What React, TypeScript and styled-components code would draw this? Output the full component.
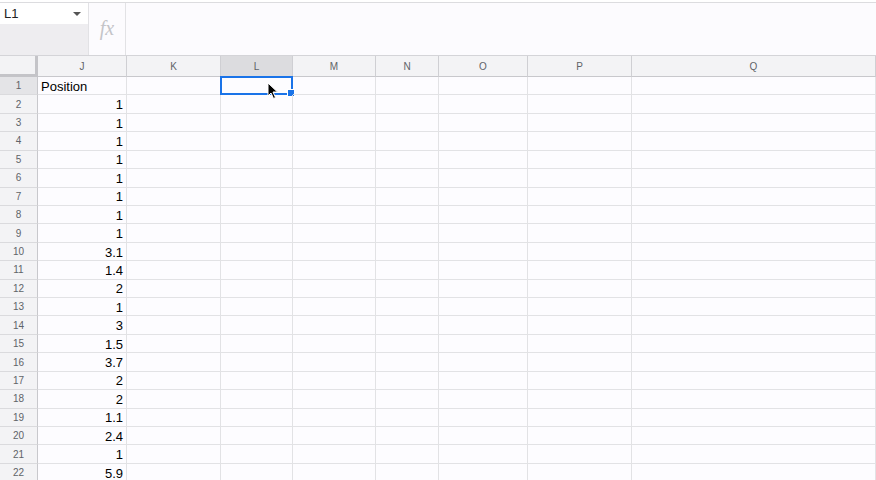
import React from "react";
import styled, { createGlobalStyle } from "styled-components";

const GlobalStyle = createGlobalStyle`
  html, body {
    margin: 0;
    padding: 0;
    background: #ffffff;
    overflow: hidden;
  }
  body {
    font-family: "Liberation Sans", Arial, sans-serif;
  }
`;

const Page = styled.div`
  width: 876px;
  height: 480px;
  padding-top: 2px;
  box-sizing: border-box;
  background: #fff;
  overflow: hidden;
`;

const FormulaBar = styled.div`
  display: flex;
  height: 54px;
  border-top: 1px solid #dcdcdf;
  border-bottom: 1px solid #d4d4d8;
  box-sizing: border-box;
  background: #fcfbfe;
`;

const NameBox = styled.div`
  width: 88px;
  display: flex;
  flex-direction: column;
  border-right: 1px solid #e2e2e5;
`;

const NameTop = styled.div`
  height: 21px;
  display: flex;
  align-items: center;
  justify-content: space-between;
  padding: 0 7px 0 4px;
  background: #fff;
  font-size: 13px;
  color: #222;
`;

const Caret = styled.span`
  width: 0;
  height: 0;
  border-left: 4px solid transparent;
  border-right: 4px solid transparent;
  border-top: 4px solid #555;
`;

const NameRest = styled.div`
  flex: 1;
  background: #eeedf0;
`;

const FxBox = styled.div`
  width: 37px;
  display: flex;
  align-items: center;
  justify-content: center;
  border-right: 1px solid #e2e2e5;
  font-family: "Liberation Serif", "DejaVu Serif", serif;
  font-style: italic;
  font-size: 20px;
  color: #c4c4c8;
  padding-bottom: 2px;
  box-sizing: border-box;
`;

const FormulaInput = styled.div`
  flex: 1;
  background: #fcfbfe;
`;

const Grid = styled.div`
  display: grid;
  grid-template-columns: 38px 89px 94px 72px 83px 63px 89px 104px 1fr;
  grid-template-rows: 21px repeat(22, 18.43px);
  background: #fdfcff;
`;

const Corner = styled.div`
  background: #f3f3f5;
  border-right: 3px solid #c4c4c8;
  border-bottom: 3px solid #c4c4c8;
  box-sizing: border-box;
`;

const ColHead = styled.div<{ $active?: boolean }>`
  display: flex;
  align-items: center;
  justify-content: center;
  background: ${(p) => (p.$active ? "#dcdcdf" : "#f3f3f5")};
  border-right: 1px solid #cfcfd3;
  border-bottom: 1px solid #c8c8cc;
  box-sizing: border-box;
  font-size: 10px;
  color: #5f6368;
`;

const RowHead = styled.div<{ $active?: boolean }>`
  display: flex;
  align-items: center;
  justify-content: center;
  background: ${(p) => (p.$active ? "#e4e4e7" : "#f3f3f5")};
  border-right: 1px solid #c8c8cc;
  border-bottom: 1px solid #dadadd;
  box-sizing: border-box;
  font-size: 10px;
  color: #5f6368;
`;

const Cell = styled.div<{ $align?: "left" | "right" }>`
  position: relative;
  display: flex;
  align-items: center;
  justify-content: ${(p) => (p.$align === "right" ? "flex-end" : "flex-start")};
  padding: 1px 3px 0 3px;
  border-right: 1px solid #e2e2e5;
  border-bottom: 1px solid #e2e2e5;
  box-sizing: border-box;
  font-size: 13px;
  color: #000;
  white-space: nowrap;
`;

const Selection = styled.div`
  position: absolute;
  left: -1px;
  top: -1px;
  right: -1px;
  bottom: -1px;
  border: 2px solid #1a73e8;
  pointer-events: none;
`;

const Handle = styled.div`
  position: absolute;
  right: -4px;
  bottom: -4px;
  width: 6px;
  height: 6px;
  background: #1a73e8;
  border: 1px solid #fff;
`;

const Pointer = styled.svg`
  position: absolute;
  left: 45px;
  top: 4px;
`;

const columns = ["J", "K", "L", "M", "N", "O", "P", "Q"];
const values = [
  "Position", "1", "1", "1", "1", "1", "1", "1", "1", "3.1", "1.4",
  "2", "1", "3", "1.5", "3.7", "2", "2", "1.1", "2.4", "1", "5.9",
];

function App() {
  return (
    <Page>
      <GlobalStyle />
      <FormulaBar>
        <NameBox>
          <NameTop>
            L1
            <Caret />
          </NameTop>
          <NameRest />
        </NameBox>
        <FxBox>fx</FxBox>
        <FormulaInput />
      </FormulaBar>
      <Grid>
        <Corner />
        {columns.map((c) => (
          <ColHead key={c} $active={c === "L"}>
            {c}
          </ColHead>
        ))}
        {values.map((v, i) => (
          <React.Fragment key={i}>
            <RowHead $active={i === 0}>{i + 1}</RowHead>
            <Cell $align={i === 0 ? "left" : "right"}>{v}</Cell>
            {columns.slice(1).map((c) => (
              <Cell key={c}>
                {i === 0 && c === "L" && (
                  <Selection>
                    <Handle />
                    <Pointer width="12" height="18" viewBox="0 0 12 18">
                      <path
                        d="M1 1 L1 14 L4 11 L6.5 16.5 L8.5 15.5 L6 10 L10.5 10 Z"
                        fill="#000"
                        stroke="#fff"
                        strokeWidth="1"
                        strokeLinejoin="round"
                      />
                    </Pointer>
                  </Selection>
                )}
              </Cell>
            ))}
          </React.Fragment>
        ))}
      </Grid>
    </Page>
  );
}

export default App;
